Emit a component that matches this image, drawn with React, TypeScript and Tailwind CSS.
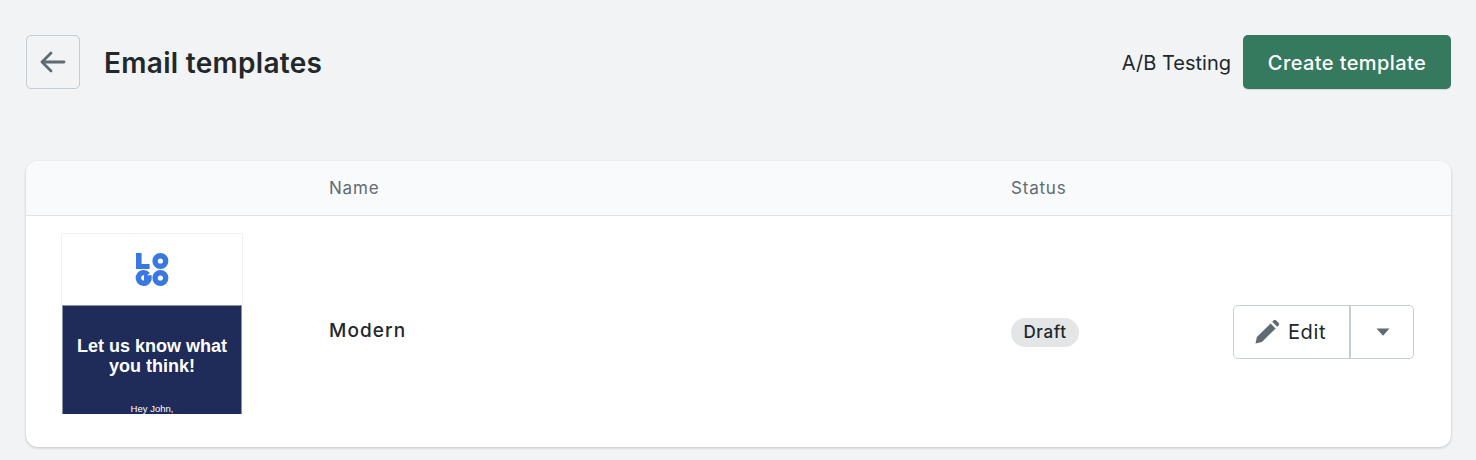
function Logo() {
    return (
        <svg width="34" height="34" viewBox="0 0 34 34" fill="none" stroke="#3878e0">
            <path d="M1 0h5.6v11h8V16H1z" fill="#3878e0" stroke="none" />
            <circle cx="25.4" cy="8" r="5.3" strokeWidth="5.4" />
            <path d="M12.8 21.6A5.3 5.3 0 1 0 14 25H9" strokeWidth="5.4" />
            <circle cx="25.4" cy="25" r="5.3" strokeWidth="5.4" />
        </svg>
    );
}

function Thumbnail() {
    return (
        <div className="w-[182px] h-[181px] flex flex-col overflow-hidden">
            <div className="h-[72px] border border-b-0 border-[#f1f2f4] flex items-center justify-center bg-white">
                <Logo />
            </div>
            <div className="flex-1 mx-px bg-[#1f2c5a] border-x border-t border-[#8a90a8] text-white text-center font-['Liberation_Sans',sans-serif] overflow-hidden">
                <div className="mt-[30px] text-[18px] leading-[20px] font-bold">
                    Let us know what
                    <br />
                    you think!
                </div>
                <div className="mt-[27px] text-[9.5px] leading-[12px]">Hey John,</div>
            </div>
        </div>
    );
}

function EditButton() {
    return (
        <div className="flex h-[54px] w-[181px] rounded-[5px] border border-[#c4cdd3] bg-white">
            <button className="flex flex-1 items-center justify-center gap-[8px] border-r-2 border-[#c4cdd3] pr-[3px] text-[20px] tracking-[0.6px] text-[#22272b]">
                <svg width="26" height="26" viewBox="0 0 26 26" fill="#5f6b73">
                    <path d="M1.5 24.5l1.4-6.4L16.6 4.4l5 5L7.9 23.1z" />
                    <path d="M18.2 2.8l1.5-1.5a1.6 1.6 0 0 1 2.2 0l2.8 2.8a1.6 1.6 0 0 1 0 2.2l-1.5 1.5z" />
                </svg>
                Edit
            </button>
            <button className="flex w-[62px] items-center justify-center pl-[2px]">
                <svg width="14" height="8" viewBox="0 0 14 8" fill="#5f6b73">
                    <path d="M0.5 0.5h13L7 7.8z" />
                </svg>
            </button>
        </div>
    );
}

export default function App() {
    return (
        <div className="min-h-[460px] bg-[#f1f3f5] pl-[26px] pr-[25px] pt-[35px] pb-[13px] font-['Inter',sans-serif]">
            <header className="flex items-center justify-between h-[54px]">
                <div className="flex items-center gap-[24px]">
                    <button className="flex h-[54px] w-[54px] items-center justify-center rounded-[5px] border border-[#c4cdd3]">
                        <svg width="26" height="22" viewBox="0 0 26 22" fill="none" stroke="#5f6b73" strokeWidth="2.8" strokeLinecap="round" strokeLinejoin="round">
                            <path d="M24 11H2M11 2L2 11l9 9" />
                        </svg>
                    </button>
                    <h1 className="mt-[2px] text-[28px] font-semibold text-[#22272b] tracking-[0.3px]">Email templates</h1>
                </div>
                <div className="flex items-center gap-3">
                    <span className="mt-[2px] text-[20px] text-[#22272b]">A/B Testing</span>
                    <button className="h-[54px] w-[208px] rounded-[5px] bg-[#35795e] pt-px text-[20px] font-medium tracking-[0.4px] text-white shadow-[0_1px_1px_rgba(0,0,0,0.12)]">
                        Create template
                    </button>
                </div>
            </header>

            <div className="mt-[72px] rounded-[12px] bg-white shadow-[0_1px_3px_rgba(0,0,0,0.2)] overflow-hidden">
                <div className="grid h-[55px] grid-cols-[303px_682px_1fr] items-center border-b border-[#dfe3e6] bg-[#f9fafc] pt-[2px] text-[17px] tracking-[0.8px] text-[#5f6b73]">
                    <div />
                    <div>Name</div>
                    <div>Status</div>
                </div>
                <div className="grid h-[231px] grid-cols-[303px_682px_1fr] items-center">
                    <div className="self-start pl-[35px] pt-[17px]">
                        <Thumbnail />
                    </div>
                    <div className="text-[19px] font-medium tracking-[1.1px] text-[#22272b]">Modern</div>
                    <div className="flex items-center justify-between pr-[37px]">
                        <span className="mt-[2px] rounded-full bg-[#e4e5e7] px-[12.5px] py-[4px] text-[17px] font-medium leading-[21px] tracking-[0.6px] text-[#22272b]">Draft</span>
                        <EditButton />
                    </div>
                </div>
            </div>
        </div>
    );
}
